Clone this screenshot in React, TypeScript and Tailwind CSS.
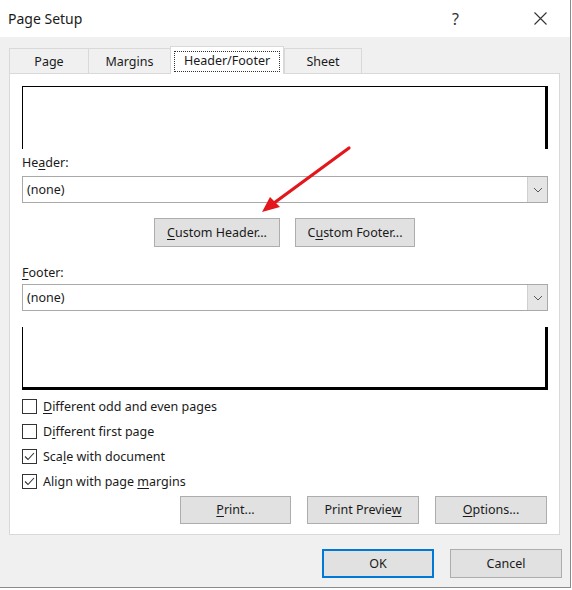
import React from 'react';

const font = { fontFamily: '"Noto Sans", "Open Sans", sans-serif' };

const U: React.FC<{ children: React.ReactNode }> = ({ children }) => <span className="underline underline-offset-2">{children}</span>;

const Btn: React.FC<{ className?: string; children: React.ReactNode }> = ({ className = '', children }) => (
  <div className={`flex items-center justify-center pt-[1px] bg-[#e1e1e1] border border-[#adadad] text-[12.5px] text-[#1a1a1a] ${className}`}>
    {children}
  </div>
);

const Select: React.FC = () => (
  <div className="flex h-[27px] border border-[#a9a9a9] bg-white">
    <div className="flex-1 flex items-center pl-[4px] pt-[2px] text-[12.5px] text-[#1a1a1a]">(none)</div>
    <div className="w-[20px] bg-[#e5e5e5] border-l border-[#cfcfcf] flex items-center justify-center">
      <svg width="10" height="6" viewBox="0 0 10 6">
        <path d="M1 1 L5 5 L9 1" fill="none" stroke="#5a5a5a" strokeWidth="1" />
      </svg>
    </div>
  </div>
);

const Check: React.FC<{ checked?: boolean; children: React.ReactNode }> = ({ checked, children }) => (
  <div className="flex items-center h-[25px]">
    <div className="w-[15px] h-[15px] border border-[#333] bg-white flex items-center justify-center">
      {checked && (
        <svg width="11" height="9" viewBox="0 0 11 9">
          <path d="M1 4.5 L4 7.5 L10 1" fill="none" stroke="#333" strokeWidth="1.1" />
        </svg>
      )}
    </div>
    <span className="ml-[6px] pt-[2px] text-[12.5px] text-[#1a1a1a]">{children}</span>
  </div>
);

const Tab: React.FC<{ w: string; children: React.ReactNode }> = ({ w, children }) => (
  <div className={`${w} h-[25px] mt-[2px] pt-[3px] border-t border-l border-[#d9d9d9] bg-[#f0f0f0] flex items-center justify-center text-[12.5px] text-[#1a1a1a]`}>
    {children}
  </div>
);

export default function App() {
  return (
    <div className="relative w-[572px] h-[590px] overflow-hidden bg-white" style={font}>
      <div className="w-[571px] h-[588px] border-r border-b border-[#8a8a8a] flex flex-col bg-[#f0f0f0]">
        {/* title bar */}
        <div className="h-[37px] bg-white flex items-center">
          <span className="ml-[8px] text-[14px] text-[#1a1a1a]">Page Setup</span>
          <span className="ml-auto mr-[75px] text-[16px] text-[#333]">?</span>
          <svg className="mr-[23px]" width="13" height="13" viewBox="0 0 13 13">
            <path d="M0.5 0.5 L12.5 12.5 M12.5 0.5 L0.5 12.5" stroke="#333" strokeWidth="1.1" />
          </svg>
        </div>

        {/* tabs */}
        <div className="flex pl-[9px] mt-[9px] h-[27px]">
          <Tab w="w-[79px]">Page</Tab>
          <Tab w="w-[82px]">Margins</Tab>
          <div className="w-[114px] h-[28px] -mb-px pt-[2px] relative z-10 border-t border-l border-r border-[#d9d9d9] bg-white flex items-center justify-center">
            <div className="border border-dotted border-[#333] h-[21px] w-[106px] flex items-center justify-center text-[12.5px] text-[#1a1a1a]">
              Header/Footer
            </div>
          </div>
          <Tab w="w-[78px] border-r">Sheet</Tab>
        </div>

        {/* panel */}
        <div className="ml-[9px] w-[551px] h-[462px] border border-[#d9d9d9] bg-white pl-[12px] pr-[11px] flex flex-col">
          <div className="mt-[12px] h-[63px] border-t border-l border-black border-r-[3px] border-r-black" />
          <div className="mt-[6px] h-[16px] leading-[16px] text-[12.5px] text-[#1a1a1a]">He<U>a</U>der:</div>
          <div className="mt-[5px]"><Select /></div>
          <div className="mt-[15px] flex justify-center gap-[15px] pr-[1px]">
            <Btn className="w-[126px] h-[29px]"><span><U>C</U>ustom Header...</span></Btn>
            <Btn className="w-[120px] h-[29px]"><span>C<U>u</U>stom Footer...</span></Btn>
          </div>
          <div className="mt-[18px] h-[16px] leading-[16px] text-[12.5px] text-[#1a1a1a]"><U>F</U>ooter:</div>
          <div className="mt-[3px]"><Select /></div>
          <div className="mt-[16px] h-[63px] border-l border-black border-r-[3px] border-r-black border-b-[3px] border-b-black" />
          <div className="mt-[4px] flex flex-col">
            <Check><U>D</U>ifferent odd and even pages</Check>
            <Check>D<U>i</U>fferent first page</Check>
            <Check checked>Sca<U>l</U>e with document</Check>
            <Check checked>Align with page <U>m</U>argins</Check>
          </div>
          <div className="mt-[2px] flex justify-end gap-[16px] pr-[1px]">
            <Btn className="w-[111px] h-[28px]"><span><U>P</U>rint...</span></Btn>
            <Btn className="w-[112px] h-[28px]"><span>Print Previe<U>w</U></span></Btn>
            <Btn className="w-[112px] h-[28px]"><span><U>O</U>ptions...</span></Btn>
          </div>
        </div>

        {/* dialog buttons */}
        <div className="mt-[14px] flex gap-[16px] pl-[322px]">
          <Btn className="w-[112px] h-[29px] !border-2 !border-[#0078d7]">OK</Btn>
          <Btn className="w-[112px] h-[29px]">Cancel</Btn>
        </div>
      </div>

      {/* red arrow */}
      <svg className="absolute left-0 top-0 pointer-events-none" width="572" height="590">
        <line x1="349" y1="148" x2="274" y2="203" stroke="#e3161b" strokeWidth="3.2" strokeLinecap="round" />
        <polygon points="262,212 270,197 280,207" fill="#e3161b" />
      </svg>
    </div>
  );
}
